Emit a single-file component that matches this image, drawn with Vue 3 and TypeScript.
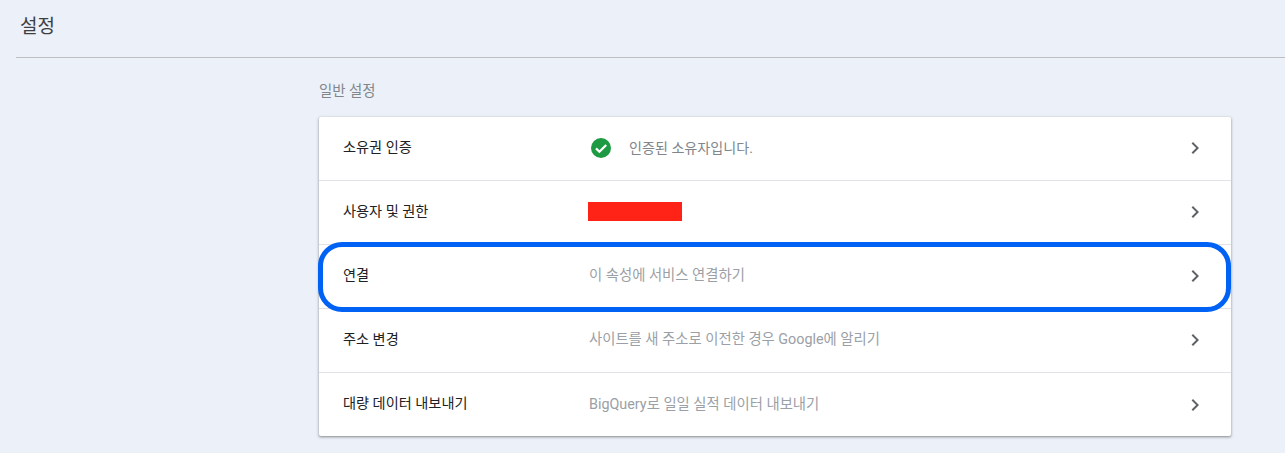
<script setup lang="ts">
interface SettingRow {
  label: string
  desc?: string
  verified?: boolean
  redacted?: boolean
  marked?: boolean
}

const rows: SettingRow[] = [
  { label: '소유권 인증', desc: '인증된 소유자입니다.', verified: true },
  { label: '사용자 및 권한', redacted: true },
  { label: '연결', desc: '이 속성에 서비스 연결하기', marked: true },
  { label: '주소 변경', desc: '사이트를 새 주소로 이전한 경우 Google에 알리기' },
  { label: '대량 데이터 내보내기', desc: 'BigQuery로 일일 실적 데이터 내보내기' },
]
</script>

<template>
  <div class="page">
    <header class="head">
      <h1 class="title">설정</h1>
    </header>
    <main class="content">
      <div class="section-title">일반 설정</div>
      <section class="card">
        <div v-for="row in rows" :key="row.label" class="row">
          <div class="label">{{ row.label }}</div>
          <div class="value">
            <template v-if="row.verified">
              <svg class="check" width="24" height="24" viewBox="0 0 24 24">
                <circle cx="12" cy="12" r="10" fill="#1e9a42" />
                <path d="M7 12.4l3.4 3.4L17.2 9" fill="none" stroke="#fff" stroke-width="2.2" />
              </svg>
              <span class="desc verified">{{ row.desc }}</span>
            </template>
            <div v-else-if="row.redacted" class="redact"></div>
            <span v-else class="desc">{{ row.desc }}</span>
          </div>
          <svg class="chevron" width="24" height="24" viewBox="0 0 24 24">
            <path d="M10 6L8.59 7.41 13.17 12l-4.58 4.59L10 18l6-6z" fill="#5f6368" />
          </svg>
          <div v-if="row.marked" class="mark"></div>
        </div>
      </section>
    </main>
  </div>
</template>

<style>
html,
body {
  margin: 0;
  background: #ecf0f8;
}
</style>

<style scoped>
.page {
  height: 453px;
  overflow: hidden;
  background: #ecf0f8;
  font-family: Roboto, "Noto Sans CJK KR", sans-serif;
}
.head {
  height: 57px;
  margin-left: 16px;
  padding-left: 4px;
  border-bottom: 1px solid #bdbfc3;
}
.title {
  margin: 0;
  padding-top: 14px;
  font-size: 19px;
  line-height: 26px;
  font-weight: 400;
  color: #3c4043;
}
.content {
  width: 912px;
  margin-left: 319px;
}
.section-title {
  height: 59px;
  padding-top: 24px;
  box-sizing: border-box;
  font-size: 14.4px;
  line-height: 20px;
  color: #80868b;
}
.card {
  background: #fff;
  border-radius: 2px;
  box-shadow: 0 1px 2px rgba(60, 64, 67, 0.4), 0 1px 3px 1px rgba(60, 64, 67, 0.16);
}
.row {
  position: relative;
  display: flex;
  align-items: center;
  height: 64px;
  box-sizing: border-box;
  padding: 0 24px 1px;
  border-bottom: 1px solid #e0e2e5;
}
.row:last-child {
  height: 63px;
  padding-bottom: 0;
  border-bottom: 0;
}
.label {
  width: 246px;
  padding-bottom: 3px;
  font-size: 14.2px;
  line-height: 20px;
  color: #202124;
}
.value {
  flex: 1;
  display: flex;
  align-items: center;
}
.desc {
  font-size: 14.35px;
  line-height: 20px;
  color: #9aa0a6;
}
.verified {
  margin-left: 14px;
  padding-left: 2px;
  font-size: 14.1px;
  color: #80868b;
}
.redact {
  width: 94px;
  height: 19px;
  margin-top: -1px;
  margin-left: -1px;
  background: #ff2216;
}
.chevron {
  flex: none;
}
.mark {
  position: absolute;
  left: -1px;
  right: 0;
  top: -3px;
  bottom: -4px;
  box-sizing: border-box;
  border: 5px solid #0062f5;
  border-radius: 24px;
  pointer-events: none;
}
</style>
